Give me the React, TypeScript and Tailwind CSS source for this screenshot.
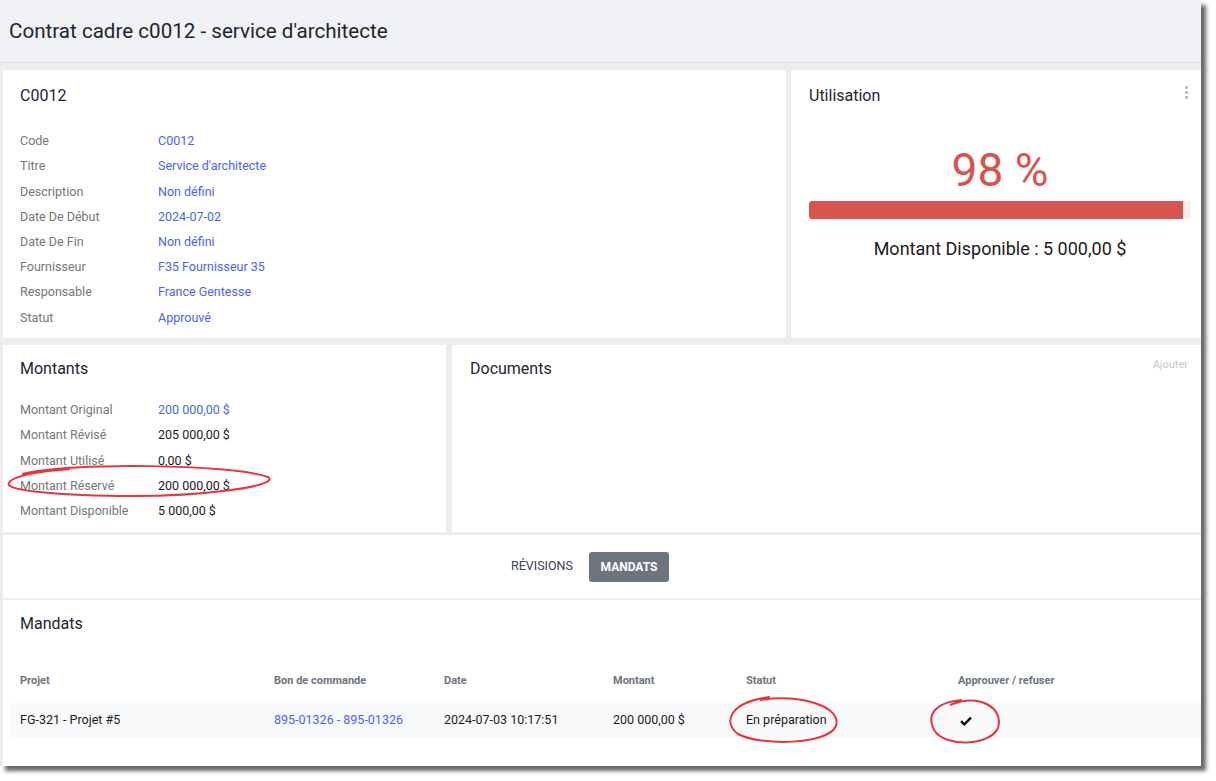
import React from 'react';

type Row = { label: string; value: string; link?: boolean };

const contractRows: Row[] = [
  { label: 'Code', value: 'C0012', link: true },
  { label: 'Titre', value: "Service d'architecte", link: true },
  { label: 'Description', value: 'Non défini', link: true },
  { label: 'Date De Début', value: '2024-07-02', link: true },
  { label: 'Date De Fin', value: 'Non défini', link: true },
  { label: 'Fournisseur', value: 'F35 Fournisseur 35', link: true },
  { label: 'Responsable', value: 'France Gentesse', link: true },
  { label: 'Statut', value: 'Approuvé', link: true },
];

const amountRows: Row[] = [
  { label: 'Montant Original', value: '200 000,00 $', link: true },
  { label: 'Montant Révisé', value: '205 000,00 $' },
  { label: 'Montant Utilisé', value: '0,00 $' },
  { label: 'Montant Réservé', value: '200 000,00 $' },
  { label: 'Montant Disponible', value: '5 000,00 $' },
];

function InfoRows({ rows }: { rows: Row[] }) {
  return (
    <div className="flex flex-col">
      {rows.map((row) => (
        <div key={row.label} className="flex h-[25.2px] items-center text-[12.5px]">
          <span className="w-[138px] text-[#767676]">{row.label}</span>
          <span className={row.link ? 'text-[#4b63f2]' : 'text-[#1b1b1b]'}>{row.value}</span>
        </div>
      ))}
    </div>
  );
}

export default function App() {
  const usage = 98;

  return (
    <div className="min-h-screen bg-white font-['Roboto','Liberation_Sans',sans-serif]">
      <div className="relative flex h-[766px] w-[1201px] flex-col bg-[#ececec] shadow-[5px_5px_4px_rgba(0,0,0,0.6)]">
        {/* header */}
        <div className="flex h-[63px] items-center border-b border-[#dcdde2] bg-[#f1f2f6] px-[9px]">
          <h1 className="text-[20.6px] text-[#1f2433]">Contrat cadre c0012 - service d'architecte</h1>
        </div>

        {/* first row */}
        <div className="mt-[7px] flex h-[268px] gap-[5px] pl-[3px]">
          <div className="w-[783px] bg-white px-[17px] pt-[16px]">
            <h2 className="text-[16px] leading-5 text-[#1f2433]">C0012</h2>
            <div className="mt-[23px]">
              <InfoRows rows={contractRows} />
            </div>
          </div>
          <div className="relative flex-1 bg-white pl-[18px] pr-[10px] pt-[16px]">
            <h2 className="text-[16px] leading-5 text-[#1f2433]">Utilisation</h2>
            <div className="absolute right-[13px] top-[16px] flex flex-col gap-[2px]">
              <span className="h-[3px] w-[3px] bg-[#b9c0cb]" />
              <span className="h-[3px] w-[3px] bg-[#b9c0cb]" />
              <span className="h-[3px] w-[3px] bg-[#b9c0cb]" />
            </div>
            <div className="mt-[38px] text-center text-[46px] leading-[52px] text-[#d9534f]">{usage} %</div>
            <div className="mt-[5px] h-[18px] w-full overflow-hidden rounded-[3px] bg-[#f1f1f1]">
              <div className="h-full bg-[#d9534f]" style={{ width: `${usage}%` }} />
            </div>
            <div className="mt-[16px] text-center text-[18px] text-[#1b1b1b]">Montant Disponible : 5 000,00 $</div>
          </div>
        </div>

        {/* second row */}
        <div className="mt-[7px] flex h-[187px] gap-[6px] pl-[3px]">
          <div className="w-[443px] bg-white px-[17px] pt-[14px]">
            <h2 className="text-[16px] leading-5 text-[#1f2433]">Montants</h2>
            <div className="mt-[19px]">
              <InfoRows rows={amountRows} />
            </div>
          </div>
          <div className="flex flex-1 items-start justify-between bg-white pl-[18px] pr-[13px] pt-[14px]">
            <h2 className="text-[16px] leading-5 text-[#1f2433]">Documents</h2>
            <span className="mt-[-2px] text-[11px] text-[#c6cad1]">Ajouter</span>
          </div>
        </div>

        {/* tabs */}
        <div className="ml-[3px] mt-[3px] flex h-[63px] items-center justify-center gap-[6px] bg-white pr-[34px]">
          <button className="h-[30px] rounded-[3px] px-[10px] text-[12.5px] font-normal uppercase text-[#3a4350]">
            Révisions
          </button>
          <button className="h-[30px] w-[80px] rounded-[3px] bg-[#6c757d] text-[12px] font-bold uppercase text-white">
            Mandats
          </button>
        </div>

        {/* mandats */}
        <div className="ml-[3px] mt-[2px] flex-1 bg-white pl-[7px] pt-[14px]">
          <h2 className="pl-[10px] text-[16px] leading-5 text-[#1f2433]">Mandats</h2>
          <table className="mt-[25px] w-full table-fixed border-collapse text-left">
            <thead>
              <tr className="h-[44px] text-[11px] font-bold text-[#6c757d]">
                <th className="w-[264px] pl-[10px] font-bold">Projet</th>
                <th className="w-[170px] font-bold">Bon de commande</th>
                <th className="w-[169px] font-bold">Date</th>
                <th className="w-[133px] font-bold">Montant</th>
                <th className="w-[212px] font-bold">Statut</th>
                <th className="font-bold">Approuver / refuser</th>
              </tr>
            </thead>
            <tbody>
              <tr className="h-[35px] bg-[#f8f9fb] text-[12.5px] text-[#1b1b1b]">
                <td className="pl-[10px]">FG-321 - Projet #5</td>
                <td className="text-[#4b63f2]">895-01326 - 895-01326</td>
                <td>2024-07-03 10:17:51</td>
                <td>200 000,00 $</td>
                <td>En préparation</td>
                <td>
                  <svg width="12" height="10" viewBox="0 0 12 10" className="ml-[2px]">
                    <path d="M1 5.2 L4.3 8.4 L11 1.6" fill="none" stroke="#111" strokeWidth="2.4" />
                  </svg>
                </td>
              </tr>
            </tbody>
          </table>
        </div>

        {/* hand-drawn annotations */}
        <svg className="pointer-events-none absolute left-0 top-0" width="1201" height="766">
          <g fill="none" stroke="#e8343c" strokeWidth="2">
            <path d="M22 474 C 70 462, 230 464, 268 477 C 282 486, 200 497, 120 496 C 50 495, 4 490, 9 483 C 12 476, 40 471, 70 469" />
            <path d="M760 700 C 800 694, 842 706, 836 726 C 828 745, 760 746, 738 734 C 722 722, 730 702, 770 697" />
            <path d="M950 705 C 980 693, 1004 708, 998 728 C 990 746, 945 748, 934 730 C 926 714, 936 702, 962 700" />
          </g>
        </svg>
      </div>
    </div>
  );
}
